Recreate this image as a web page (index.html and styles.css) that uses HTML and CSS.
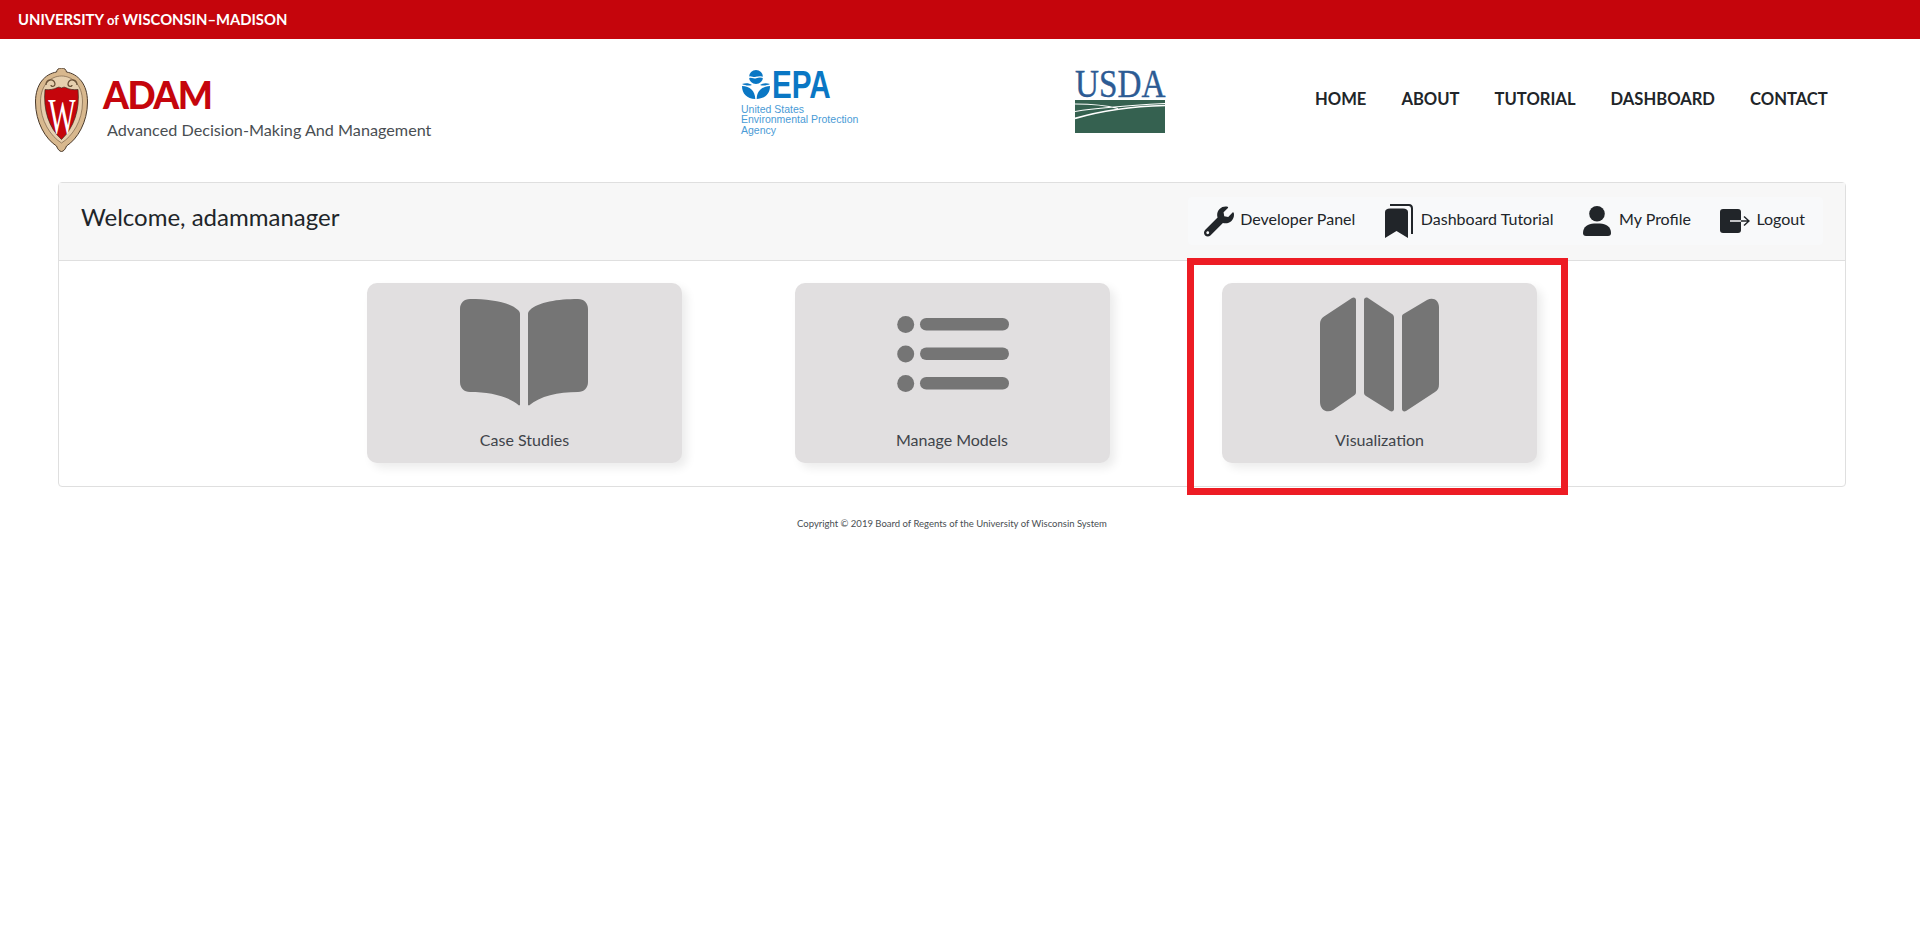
FILE: index.html

```html
<!doctype html>
<html lang="en-us">
  <head>
    <meta charset="utf-8">
    <title>ADAM</title>
    <link rel="stylesheet" href="styles.css">
  </head>
  <body>
    <div class="topbar">UNIVERSITY <span class="of">of</span> WISCONSIN&ndash;MADISON</div>

    <header class="masthead">
      <div class="brand">
        <svg class="crest" viewBox="0 0 53 84">
          <path d="M26.500 0c3 0 4.500 1.500 5 4C43 6 52.500 16 52.500 34c0 20-10 37-21 44-1 3-3 5.500-5 5.500s-4-2.500-5-5.500C10.500 71 .5 54 .5 34 .5 16 10 6 21.500 4c.5-2.500 2-4 5-4z" fill="#d8b88e" stroke="#4a3a2c"/>
          <path d="M26.500 8c10 0 21 8 21 26 0 19-10 34-21 41C15.500 68 5.500 53 5.500 34c0-18 11-26 21-26z" fill="#e6cfae" stroke="#7a6248" stroke-width=".7"/>
          <path d="M11 17c0-6 8-7 9-1 0 3-4 3-4 1M42 17c0-6-8-7-9-1 0 3 4 3 4 1" fill="none" stroke="#6a5238" stroke-width="1.300"/>
          <path d="M26.500 20c2-1 3-1 4-.5 4 2 8 2.500 12.500 2 2 20-4 38-16.500 50C14 60 8 42 10 21.500c4.500.5 8.500 0 12.500-2 1-.5 2-.5 4 .5z" fill="#c5050c" stroke="#3a2a20" stroke-width=".7"/>
          <text class="crest-w" transform="translate(27 65) scale(.58 1)" text-anchor="middle">W</text>
        </svg>
        <div class="brand-text">
          <div class="brand-name">ADAM</div>
          <div class="brand-sub">Advanced Decision-Making And Management</div>
        </div>
      </div>

      <div class="epa">
        <div class="epa-top">
          <svg class="epa-mark" viewBox="0 0 28 29">
            <circle cx="14" cy="7" r="7" fill="#0a77c4"/>
            <path d="M6 7.500c3-1.500 5 1 8 0s5-1 8 0" fill="none" stroke="#fff" stroke-width="1.400"/>
            <path d="M0 14c4-1.500 7-1 10 1-3 1-7 .5-10-1zM28 14c-4-1.500-7-1-10 1 3 1 7 .5 10-1z" fill="#0a77c4"/>
            <path d="M0 16c8 .5 13 4.500 13.300 13C5 28.500 0 24 0 16zM28 16c-8 .5-13 4.500-13.300 13C23 28.500 28 24 28 16z" fill="#0a77c4"/>
          </svg>
          <span class="epa-word">EPA</span>
        </div>
        <div class="epa-name">United States<br>Environmental Protection<br>Agency</div>
      </div>

      <div class="usda">
        <div class="usda-word">USDA</div>
        <svg class="usda-mark" viewBox="0 0 90 33">
          <rect width="90" height="33" fill="#356150"/>
          <path d="M0 4C15 4 30 5 43 8.500M0 11.500C15 9 35 6.500 90 3.500" fill="none" stroke="#fff" stroke-width="1.100"/>
          <path d="M0 18.500C25 11 55 6.500 90 5.500" fill="none" stroke="#fff" stroke-width="1.700"/>
        </svg>
      </div>

      <nav class="mainnav">
        <a>HOME</a>
        <a>ABOUT</a>
        <a>TUTORIAL</a>
        <a>DASHBOARD</a>
        <a>CONTACT</a>
      </nav>
    </header>

    <section class="panel">
      <div class="panel-head">
        <div class="welcome">Welcome, adammanager</div>
        <div class="actions">
          <a class="action">
            <svg class="action-icon wrench" viewBox="0 0 512 512"><path d="M507.700 109.100c-2.200-9-13.500-12.100-20.100-5.500l-74.400 74.400-67.900-11.300-11.300-67.900 74.400-74.400c6.600-6.600 3.400-17.900-5.700-20.200-47.400-11.700-99.500.9-136.600 38-39.700 39.700-50.900 96.800-34.400 146.500L18.700 402.700c-25 25-25 65.500 0 90.500s65.500 25 90.500 0l213-213c49.700 16.600 106.800 5.300 146.600-34.500 37.200-37.200 49.800-89.400 39.900-136.600zM64 472c-13.300 0-24-10.700-24-24s10.700-24 24-24 24 10.700 24 24-10.700 24-24 24z"/></svg>
            Developer Panel
          </a>
          <a class="action">
            <svg class="action-icon bookmark" viewBox="0 0 28 34"><path d="M0 8c0-2 2-3.500 5-3.500h13c3 0 5 1.500 5 3.500v26l-11.500-7L0 34z"/><path d="M5 1h19c2 0 3 1.500 3 3.500V30" fill="none" stroke="#212529" stroke-width="2"/></svg>
            Dashboard Tutorial
          </a>
          <a class="action">
            <svg class="action-icon person" viewBox="0 0 28 30"><circle cx="14" cy="7.800" r="7.800"/><path d="M0 27c0-6 5-9.500 11-9.500h6c6 0 11 3.500 11 9.500 0 2-1 3-3 3H3c-2 0-3-1-3-3z"/></svg>
            My Profile
          </a>
          <a class="action">
            <svg class="action-icon logout" viewBox="0 0 30 24"><rect width="21" height="24" rx="3"/><path d="M10 12h11" stroke="#f8f9fa" stroke-width="1.500"/><path d="M21 12h8M24 7.500l5 4.500-5 4.500" fill="none" stroke="#212529" stroke-width="1.500"/></svg>
            Logout
          </a>
        </div>
      </div>
      <div class="tiles">
        <a class="tile">
          <svg class="tile-icon book-icon" width="128" height="107" viewBox="0 0 128 107"><path d="M10 0C30 0 50 3 58 11c1.500 1.500 2 2.500 2 4v91l-1 .5C48 97 30 93 10 93 4 93 0 89 0 83V10C0 4 4 0 10 0zM118 0c6 0 10 4 10 10v73c0 6-4 10-10 10-20 0-38 4-49 13.500l-1-.5V15c0-1.500.5-2.500 2-4C78 3 98 0 118 0z"/></svg>
          <span class="tile-label">Case Studies</span>
        </a>
        <a class="tile">
          <svg class="tile-icon list-icon" width="112" height="76" viewBox="0 0 112 76"><circle cx="8.700" cy="8.500" r="8.500"/><circle cx="8.700" cy="38" r="8.500"/><circle cx="8.700" cy="67.500" r="8.500"/><rect x="23" y="2" width="89" height="12.500" rx="6.250"/><rect x="23" y="31.500" width="89" height="12.500" rx="6.250"/><rect x="23" y="61" width="89" height="12.500" rx="6.250"/></svg>
          <span class="tile-label">Manage Models</span>
        </a>
        <a class="tile">
          <svg class="tile-icon map-icon" width="119" height="116" viewBox="0 0 119 116"><path d="M36 3v92c0 1.500-.5 2.500-2 3.500L13 113c-6 3.500-13 0-13-8V27c0-3 1-5.500 4-7.500L32 1c2-1.500 4 0 4 2zM44 3c0-2 2-3 4-2l24 16c1.500 1 2 2 2 4v91c0 2-2 3-4 2L46 99c-1.500-1-2-2-2-3.500zM82 19.500c0-1 .5-2 1.500-2.500L107 3c6-3.500 12 0 12 7v77c0 4-1 6-4 8l-29 19c-2 1-4 0-4-2z"/></svg>
          <span class="tile-label">Visualization</span>
        </a>
      </div>
    </section>

    <footer class="copyright">Copyright &copy; 2019 Board of Regents of the University of Wisconsin System</footer>

    <div class="callout"></div>
  </body>
</html>
```

FILE: styles.css

```css
html, body {
  height: 100%;
}

body {
  margin: 0;
  font-family: Lato, "Liberation Sans", sans-serif;
  color: #212529;
  background: #fff;
}

.topbar {
  height: 39px;
  line-height: 38px;
  padding-left: 18px;
  background: #c5050c;
  color: #fff;
  font-size: 14.800px;
  font-weight: 700;
}

.topbar .of {
  font-size: 13px;
}

.masthead {
  display: flex;
  align-items: flex-start;
  height: 143px;
  box-sizing: border-box;
  padding: 29px 0 0 35px;
}

.brand {
  display: flex;
  width: 706px;
}

.crest {
  width: 53px;
  height: 84px;
  flex: none;
}

.crest-w {
  fill: #fff;
  font-family: "Liberation Serif", serif;
  font-size: 50px;
}

.brand-text {
  margin-left: 15px;
}

.brand-name {
  margin-top: 4px;
  color: #c5050c;
  font-size: 37px;
  line-height: 46px;
  font-weight: 900;
  letter-spacing: -1.500px;
}

.brand-sub {
  margin: 1px 0 0 4px;
  font-size: 16.200px;
  line-height: 22px;
  color: #494e52;
}

.epa {
  width: 334px;
  margin-top: 2px;
  color: #4a9bd6;
}

.epa-top {
  display: flex;
  align-items: flex-start;
  height: 29px;
}

.epa-mark {
  width: 28px;
  height: 29px;
  margin-left: 1px;
  flex: none;
}

.epa-word {
  margin-left: 2px;
  color: #0a77c4;
  font-family: "Liberation Sans", sans-serif;
  font-size: 39px;
  line-height: 29px;
  font-weight: 700;
  transform: scaleX(.76);
  transform-origin: left;
}

.epa-name {
  margin-top: 5px;
  font-family: "Liberation Sans", sans-serif;
  font-size: 10.500px;
  line-height: 10.300px;
}

.usda {
  width: 91px;
  margin-top: 2px;
}

.usda-word {
  color: #2c5b94;
  font-family: "Liberation Serif", serif;
  font-size: 41px;
  line-height: 27px;
  -webkit-text-stroke: .4px #2c5b94;
  transform: scaleX(.81);
  transform-origin: left;
}

.usda-mark {
  display: block;
  width: 90px;
  height: 33px;
  margin-top: 3px;
}

.mainnav {
  display: flex;
  gap: 35px;
  margin-left: 149px;
  margin-top: 21px;
}

.mainnav a {
  font-size: 16.600px;
  line-height: 20px;
  font-weight: 700;
  color: #212529;
}

.panel {
  margin: 0 74px 0 58px;
  border: 1px solid #dfdfdf;
  border-radius: 4px;
}

.panel-head {
  display: flex;
  align-items: flex-start;
  justify-content: space-between;
  height: 77px;
  padding: 0 22px;
  background: #f7f7f7;
  border-bottom: 1px solid #dfdfdf;
}

.welcome {
  font-size: 24px;
  line-height: 32px;
  margin-top: 18px;
}

.actions {
  display: flex;
  align-items: center;
  gap: 29.500px;
  height: 48px;
  margin-top: 14px;
  padding: 0 18px 0 16px;
  background: #f8f9fa;
  border-radius: 4px;
}

.action {
  display: flex;
  align-items: center;
  gap: 8px;
  font-size: 16px;
  line-height: 20px;
  margin-top: -4px;
}

.action-icon {
  flex: none;
  fill: #212529;
  margin-top: 4px;
}

.wrench {
  width: 30px;
  height: 31px;
  margin-right: -2px;
}

.bookmark {
  width: 28px;
  height: 34px;
}

.person {
  width: 28px;
  height: 30px;
}

.logout {
  width: 30px;
  height: 24px;
  margin-right: -2px;
}

.tiles {
  display: grid;
  grid-template-columns: repeat(3, 315px);
  justify-content: center;
  gap: 112.500px;
  padding: 22px 0 23px;
}

.tile {
  display: flex;
  flex-direction: column;
  align-items: center;
  height: 180px;
  border-radius: 10px;
  background: #e1dfe0;
  box-shadow: 5px 5px 10px rgba(0, 0, 0, .08);
}

.tile-icon {
  fill: #757575;
  margin-top: 16px;
  flex: none;
}

.book-icon {
  margin-right: 1px;
}

.list-icon {
  margin-top: 33px;
  margin-left: 2px;
}

.map-icon {
  margin-top: 14px;
}

.tile-label {
  margin-top: auto;
  margin-bottom: 13px;
  font-size: 16px;
  line-height: 20px;
  color: #3f444a;
}

.copyright {
  margin-top: 31px;
  padding-right: 16px;
  text-align: center;
  font-size: 9.500px;
  line-height: 12px;
  color: #494e52;
}

.callout {
  position: absolute;
  left: 1187px;
  top: 258px;
  width: 367px;
  height: 223px;
  border: 7px solid #ed1c24;
}
```
